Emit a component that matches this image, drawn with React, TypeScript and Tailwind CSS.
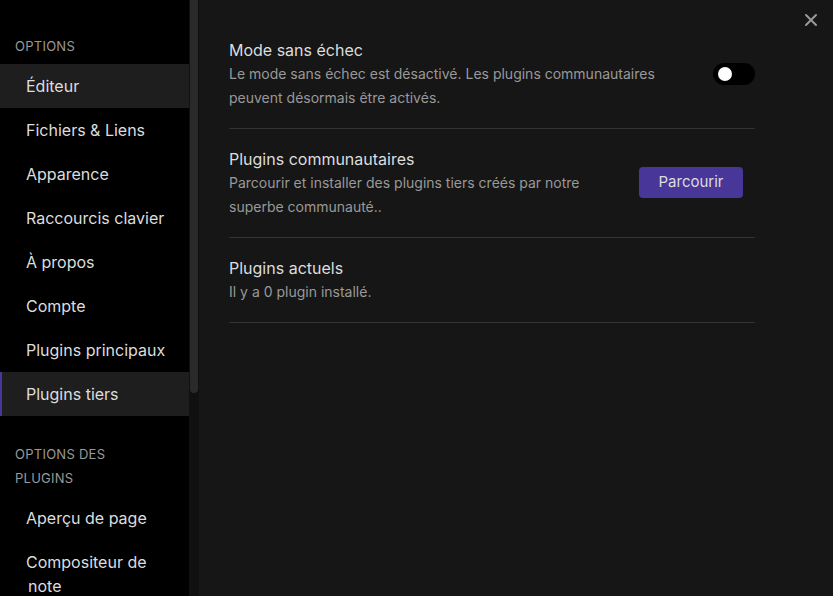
import React from 'react';

const sections = ['Éditeur', 'Fichiers & Liens', 'Apparence', 'Raccourcis clavier', 'À propos', 'Compte', 'Plugins principaux', 'Plugins tiers'];
const pluginOptions = ['Aperçu de page', 'Compositeur de note'];

const NavItem: React.FC<{ label: string; active?: boolean; hover?: boolean }> = ({ label, active, hover }) => (
  <div
    className={`py-[10px] pl-[26px] pr-3 text-[16px] leading-6 text-[#dcddde] border-l-2 ${
      active ? 'bg-[#1e1e1e] border-[#483699]' : hover ? 'bg-[#1e1e1e] border-transparent' : 'border-transparent'
    }`}
  >
    <span className="-ml-[2px]">{label}</span>
  </div>
);

const Setting: React.FC<{ title: string; desc: string; control: React.ReactNode }> = ({ title, desc, control }) => (
  <div className="flex items-center gap-5 py-[18px] border-b border-[#333333]">
    <div className="flex-1">
      <div className="text-[16px] leading-6 text-[#dcddde]">{title}</div>
      <div className="text-[14px] leading-6 text-[#999999]">{desc}</div>
    </div>
    {control}
  </div>
);

export default function App() {
  return (
    <div className="flex h-[596px] w-[833px] overflow-hidden bg-[#161616]" style={{ fontFamily: 'Inter, "Noto Sans", sans-serif' }}>
      <aside className="w-[189px] shrink-0 bg-black pt-[34px]">
        <div className="pl-[15px] pb-[6px] text-[13px] leading-6 uppercase tracking-[0.02em] text-[#999999]">Options</div>
        {sections.map((s, i) => (
          <NavItem key={s} label={s} hover={i === 0} active={s === 'Plugins tiers'} />
        ))}
        <div className="pl-[15px] pr-[40px] pt-[26px] pb-[6px] text-[13px] leading-6 uppercase tracking-[0.02em] text-[#999999]">
          Options des plugins
        </div>
        {pluginOptions.map((s) => (
          <NavItem key={s} label={s} />
        ))}
      </aside>

      <div className="w-[10px] shrink-0 bg-[#101010] px-[1px]">
        <div className="h-[393px] rounded-b-full bg-[#2a2a2a]" />
      </div>

      <main className="relative flex-1 pl-[30px] pr-[78px] pt-[20px]">
        <button className="absolute right-[15px] top-[13px] text-[#999999]">
          <svg width="14" height="14" viewBox="0 0 14 14" fill="none" stroke="currentColor" strokeWidth="2" strokeLinecap="round">
            <path d="M2 2 L12 12 M12 2 L2 12" />
          </svg>
        </button>

        <Setting
          title="Mode sans échec"
          desc="Le mode sans échec est désactivé. Les plugins communautaires peuvent désormais être activés."
          control={
            <div className="flex h-[22px] w-[42px] items-center rounded-full bg-black px-1">
              <div className="h-[14px] w-[14px] rounded-full bg-white ml-[1px]" />
            </div>
          }
        />
        <Setting
          title="Plugins communautaires"
          desc="Parcourir et installer des plugins tiers créés par notre superbe communauté.."
          control={
            <button className="mr-3 -mt-[1px] h-[31px] w-[104px] rounded-[4px] bg-[#483699] text-[15px] text-[#dcddde]">Parcourir</button>
          }
        />
        <Setting title="Plugins actuels" desc="Il y a 0 plugin installé." control={null} />
      </main>
    </div>
  );
}
